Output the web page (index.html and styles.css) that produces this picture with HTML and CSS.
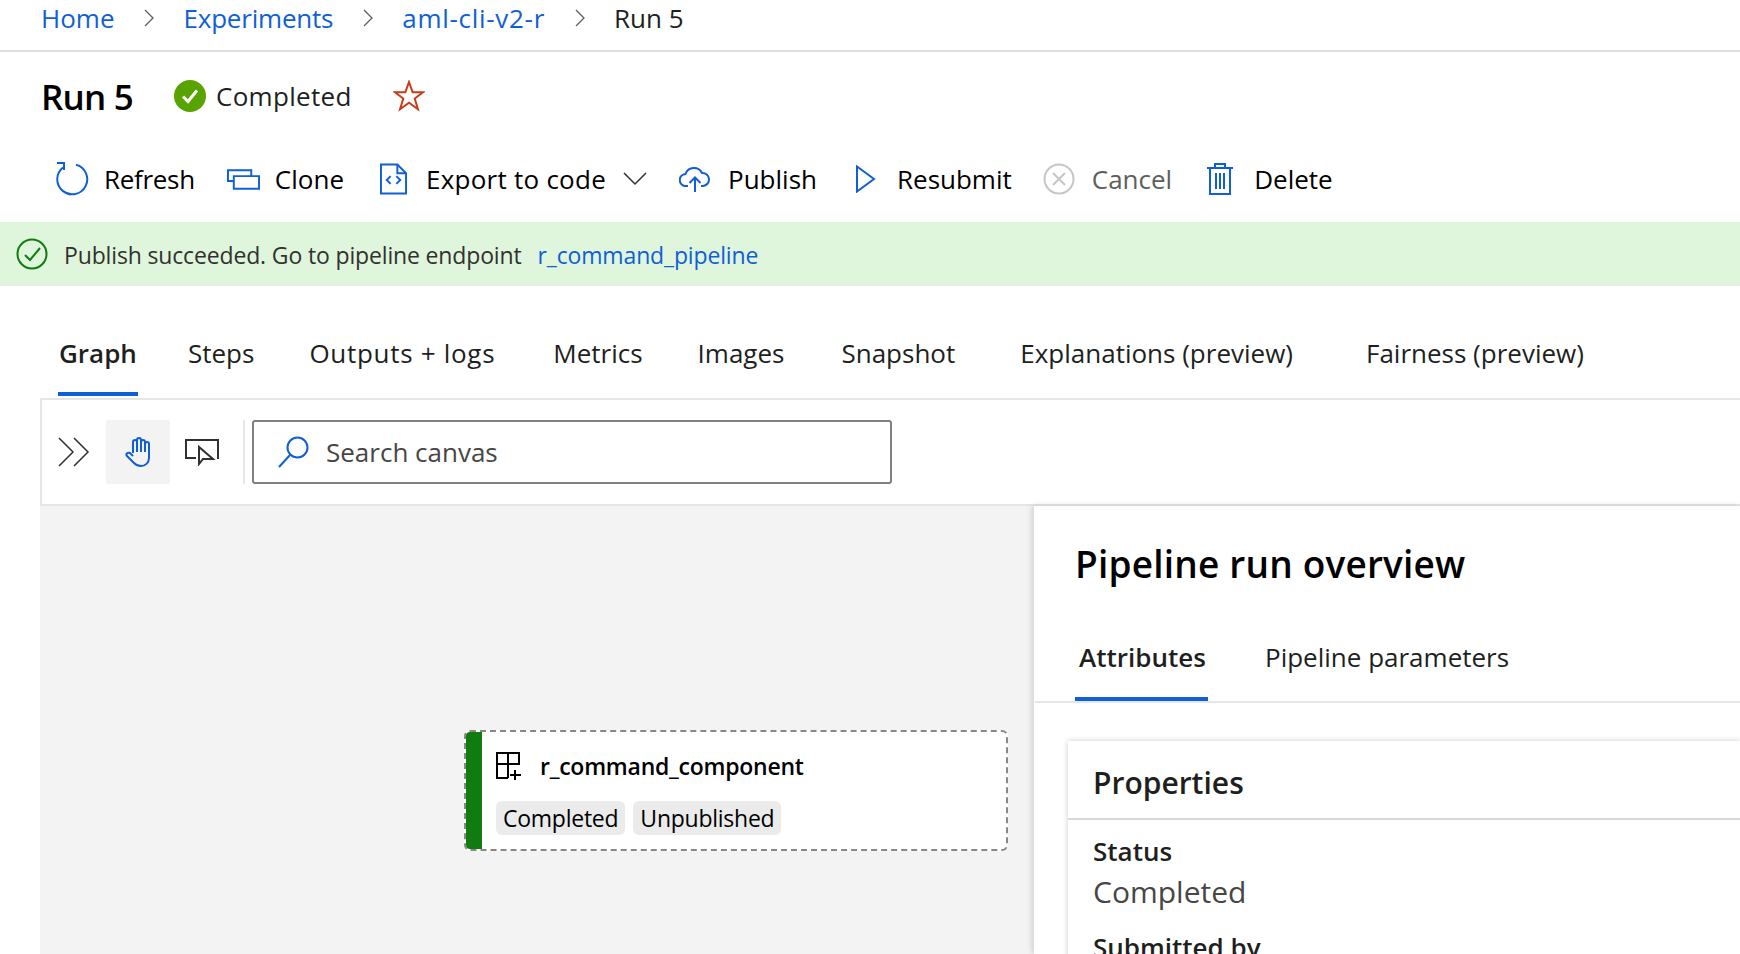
FILE: index.html
```html
<!DOCTYPE html>
<html lang="en">
<head>
  <meta charset="UTF-8">
  <meta name="viewport" content="width=device-width, initial-scale=1.0">
  <title>Run 5</title>
  <link rel="stylesheet" href="styles.css">
</head>
<body>
  <nav class="crumbs">
    <a href="#">Home</a>
    <svg class="crumb-sep" viewBox="0 0 10 18"><path d="M1 1l8 8-8 8"/></svg>
    <a class="crumb-tight" href="#">Experiments</a>
    <svg class="crumb-sep" viewBox="0 0 10 18"><path d="M1 1l8 8-8 8"/></svg>
    <a class="crumb-wide" href="#">aml-cli-v2-r</a>
    <svg class="crumb-sep" viewBox="0 0 10 18"><path d="M1 1l8 8-8 8"/></svg>
    <span>Run 5</span>
  </nav>

  <header class="title-row">
    <h1>Run 5</h1>
    <svg class="status-icon" viewBox="0 0 32 32"><circle cx="16" cy="16" r="16" fill="#57a300"/><path d="M9 16.500l5 5 9-11" fill="none" stroke="#fff" stroke-width="3"/></svg>
    <span class="status-text">Completed</span>
    <svg class="star" viewBox="0 0 24 24"><path d="M12 1.500l2.700 7.600h8l-6.400 4.800 2.400 8-6.700-4.800-6.700 4.800 2.400-8L1.300 9.100h8z"/></svg>
  </header>

  <div class="toolbar">
    <button class="tool tool-refresh">
      <svg viewBox="0 0 34 34"><path d="M21 2.800a15 15 0 1 1-13 2.700"/><path d="M2 1h7v7"/></svg>
      Refresh
    </button>
    <button class="tool tool-clone">
      <svg viewBox="0 0 34 21"><path d="M7 12H1V1h24v6"/><path d="M7 7h26v13H7z"/></svg>
      Clone
    </button>
    <button class="tool tool-export">
      <svg viewBox="0 0 28 32"><path d="M1 1h17l9 9v21H1z"/><path d="M18 1v9h9"/><path d="M11 13l-4 4 4 4M17 13l4 4-4 4"/></svg>
      Export to code
      <svg class="chevron" viewBox="0 0 24 14"><path d="M1 1l11 11L23 1"/></svg>
    </button>
    <button class="tool tool-publish">
      <svg viewBox="0 0 32 26"><path d="M9 20H7a6 6 0 0 1-.5-12A9 9 0 0 1 23 7a6.500 6.500 0 0 1 1 13h-2"/><path d="M16 26V12M10.500 17l5.500-5.500 5.500 5.500"/></svg>
      Publish
    </button>
    <button class="tool tool-resubmit">
      <svg viewBox="0 0 20 28"><path d="M1 1.500l17 12.500L1 26.500z"/></svg>
      Resubmit
    </button>
    <button class="tool tool-cancel" disabled>
      <svg viewBox="0 0 32 32"><circle cx="16" cy="16" r="14.500"/><path d="M10 10l12 12M22 10L10 22"/></svg>
      Cancel
    </button>
    <button class="tool tool-delete">
      <svg viewBox="0 0 26 32"><path d="M0 5h26M8 5V1h10v4M3 5v26h20V5M9 10v16M13 10v16M17 10v16"/></svg>
      Delete
    </button>
  </div>

  <div class="banner">
    <svg viewBox="0 0 32 32"><circle cx="16" cy="16" r="14.500"/><path d="M9 17l5 5 10-12"/></svg>
    <span>Publish succeeded. Go to pipeline endpoint</span>
    <a href="#">r_command_pipeline</a>
  </div>

  <div class="tabs">
    <a class="tab tab-active" href="#">Graph</a>
    <a class="tab tab-steps" href="#">Steps</a>
    <a class="tab tab-outputs" href="#">Outputs + logs</a>
    <a class="tab tab-metrics" href="#">Metrics</a>
    <a class="tab tab-images" href="#">Images</a>
    <a class="tab tab-snapshot" href="#">Snapshot</a>
    <a class="tab tab-explain" href="#">Explanations (preview)</a>
    <a class="tab tab-fair" href="#">Fairness (preview)</a>
  </div>

  <main class="graph">
    <div class="graph-tools">
      <svg class="expand" viewBox="0 0 32 32"><path d="M1 2l14 14L1 30M16 2l14 14-14 14"/></svg>
      <button class="graph-btn graph-btn-on">
        <svg viewBox="0 0 28 32"><path d="M9 17V6a2 2 0 0 1 4 0V4a2 2 0 0 1 4 0v2a2 2 0 0 1 4 0v2a2 2 0 0 1 4 0v14c0 5-4 8-8 8-3 0-5-1-7-3l-7-7c-2-2 1-4 3-3l3 3"/><path d="M13 6v10M17 6v10M21 8v8"/></svg>
      </button>
      <button class="graph-btn">
        <svg class="select-icon" viewBox="0 0 34 28"><path d="M11 20H1V2h32v19"/><path d="M14 9v17l4-5 10 0z"/></svg>
      </button>
      <div class="graph-div"></div>
      <div class="search">
        <svg viewBox="0 0 32 32"><circle cx="19.500" cy="11.500" r="10"/><path d="M12.500 18.500L1 31"/></svg>
        <span>Search canvas</span>
      </div>
    </div>

    <div class="graph-body">
      <div class="canvas">
        <div class="node">
          <div class="node-bar"></div>
          <div class="node-main">
            <div class="node-title">
              <svg viewBox="0 0 26 28"><path d="M1 1h22v11H1zM12 1v25M1 12v14h11M19 18v10M14 23h11"/></svg>
              <b>r_command_component</b>
            </div>
            <div class="node-tags">
              <span>Completed</span>
              <span>Unpublished</span>
            </div>
          </div>
        </div>
      </div>

      <aside class="panel">
        <h2>Pipeline run overview</h2>
        <div class="panel-tabs">
          <a class="panel-tab panel-tab-on" href="#">Attributes</a>
          <a class="panel-tab" href="#">Pipeline parameters</a>
        </div>
        <section class="card">
          <h3>Properties</h3>
          <dl>
            <dt>Status</dt>
            <dd>Completed</dd>
            <dt>Submitted by</dt>
          </dl>
        </section>
      </aside>
    </div>
  </main>
</body>
</html>
```

FILE: styles.css
```css
* {
  box-sizing: border-box;
}
html, body {
  height: 954px;
  margin: 0;
  overflow: hidden;
}
body {
  font-family: "Open Sans", "Noto Sans", sans-serif;
  font-size: 26px;
  color: #201f1e;
  background: #fff;
}
a {
  color: #0f5fd7;
  text-decoration: none;
}
svg {
  flex: none;
  fill: none;
  stroke-width: 2;
}

.crumbs {
  display: flex;
  align-items: center;
  height: 52px;
  padding: 0 0 14px 41px;
  border-bottom: 2px solid #dedede;
}
.crumb-tight {
  letter-spacing: -0.2px;
}
.crumb-wide {
  letter-spacing: 0.7px;
}
.crumb-sep {
  width: 10px;
  height: 18px;
  margin: 0 29px 0 30px;
  stroke: #605e5c;
  stroke-width: 1.300;
}

.title-row {
  display: flex;
  align-items: center;
  height: 88px;
  padding-left: 41px;
}
.title-row h1 {
  width: 91px;
  margin: 0 42px 0 0;
  font-size: 35px;
  font-weight: 600;
  color: #000;
  letter-spacing: -0.8px;
  white-space: nowrap;
}
.status-icon {
  width: 32px;
  height: 32px;
}
.status-text {
  margin-left: 10px;
  letter-spacing: 0.3px;
}
.star {
  width: 32px;
  height: 32px;
  margin-left: 41px;
  stroke: #c43e1c;
  stroke-width: 1.500;
}

.toolbar {
  display: flex;
  align-items: center;
  height: 82px;
  padding: 0 0 4px 55px;
}
.tool {
  display: flex;
  align-items: center;
  padding: 0;
  border: 0;
  background: none;
  font: inherit;
  color: #000;
  white-space: nowrap;
}
.tool svg {
  stroke: #0f5fd7;
}
.tool-refresh {
  letter-spacing: -0.3px;
}
.tool-refresh svg {
  width: 34px;
  height: 34px;
  margin-right: 15px;
}
.tool-clone {
  margin-left: 32px;
}
.tool-clone svg {
  width: 33px;
  height: 21px;
  margin-right: 15px;
}
.tool-export {
  margin-left: 36px;
  letter-spacing: 0.25px;
}
.tool-export > svg:first-child {
  width: 27px;
  height: 32px;
  margin-right: 19px;
}
.tool-export .chevron {
  width: 24px;
  height: 14px;
  margin-left: 17px;
  stroke: #323130;
  stroke-width: 1.500;
}
.tool-publish {
  margin-left: 32px;
}
.tool-publish svg {
  width: 32px;
  height: 26px;
  margin-right: 17px;
}
.tool-resubmit {
  margin-left: 39px;
}
.tool-resubmit svg {
  width: 20px;
  height: 28px;
  margin-right: 21px;
}
.tool-cancel {
  margin-left: 31px;
  color: #605e5c;
}
.tool-cancel svg {
  width: 32px;
  height: 32px;
  margin-right: 17px;
  stroke: #c8c6c4;
}
.tool-delete {
  margin-left: 35px;
}
.tool-delete svg {
  width: 26px;
  height: 32px;
  margin-right: 21px;
}

.banner {
  display: flex;
  align-items: center;
  height: 64px;
  padding-left: 16px;
  background: #dff6dd;
  font-size: 23px;
  letter-spacing: -0.15px;
}
.banner svg {
  width: 32px;
  height: 32px;
  margin-right: 16px;
  stroke: #107c10;
}
.banner span {
  margin-top: 2px;
  color: #323130;
}
.banner a {
  margin: 2px 0 0 16px;
}

.tabs {
  display: flex;
  align-items: flex-end;
  height: 112px;
  margin-left: 58px;
  padding-bottom: 2px;
}
.tab {
  height: 78px;
  padding-top: 17px;
  color: #201f1e;
}
.tab-active {
  width: 80px;
  padding-left: 1px;
  border-bottom: 4px solid #0f5fd7;
  font-weight: 600;
}
.tab-steps { margin-left: 50px; }
.tab-outputs { margin-left: 55px; letter-spacing: 0.7px; }
.tab-metrics { margin-left: 58px; }
.tab-images { margin-left: 55px; }
.tab-snapshot { margin-left: 57px; }
.tab-explain { margin-left: 65px; }
.tab-fair { margin-left: 73px; }

.graph {
  margin-left: 40px;
}
.graph-tools {
  display: flex;
  align-items: center;
  height: 108px;
  padding-left: 16px;
  border-top: 2px solid #e6e6e6;
  border-left: 2px solid #e6e6e6;
  border-bottom: 2px solid #e6e6e6;
}
.expand {
  width: 32px;
  height: 32px;
  stroke: #323130;
  stroke-width: 1.500;
}
.graph-btn {
  display: flex;
  align-items: center;
  justify-content: center;
  width: 64px;
  height: 64px;
  padding: 0;
  border: 0;
  border-radius: 3px;
  background: none;
}
.graph-btn svg {
  width: 28px;
  height: 32px;
  stroke: #323130;
}
.graph-btn-on {
  margin-left: 16px;
  background: #f3f3f3;
}
.graph-btn-on svg {
  stroke: #0f5fd7;
}
.graph-btn .select-icon {
  width: 34px;
  height: 28px;
}
.graph-div {
  width: 2px;
  height: 64px;
  margin: 0 7px 0 9px;
  background: #e6e6e6;
}
.search {
  display: flex;
  align-items: center;
  width: 640px;
  height: 64px;
  padding-left: 24px;
  border: 2px solid #808080;
  border-radius: 3px;
  color: #484644;
}
.search svg {
  width: 32px;
  height: 32px;
  margin-right: 16px;
  stroke: #0f5fd7;
}

.graph-body {
  display: flex;
  height: 448px;
  background: #f3f3f3;
}
.canvas {
  position: relative;
  flex: 1;
}
.node {
  position: absolute;
  left: 424px;
  top: 224px;
  display: flex;
  width: 544px;
  height: 121px;
  border: 2px dashed #8a8886;
  border-radius: 6px;
  background: #fff;
  color: #000;
}
.node-bar {
  width: 16px;
  background: #107c10;
  border-radius: 4px 0 0 4px;
}
.node-main {
  padding: 18px 0 0 14px;
  font-size: 23px;
  letter-spacing: -0.25px;
}
.node-title {
  display: flex;
  align-items: center;
  height: 31px;
}
.node-title svg {
  width: 26px;
  height: 28px;
  margin-right: 18px;
  stroke: #000;
}
.node-title b {
  font-weight: 600;
}
.node-tags {
  display: flex;
  gap: 8px;
  margin-top: 20px;
}
.node-tags span {
  height: 34px;
  padding: 0 7px;
  border-radius: 6px;
  background: #ebebeb;
  line-height: 34px;
}

.panel {
  width: 706px;
  padding-left: 1px;
  background: #fff;
  box-shadow: -2px 0 6px rgba(0,0,0,0.15);
}
.panel h2 {
  height: 107px;
  margin: 0;
  padding: 32px 0 0 40px;
  font-size: 37px;
  font-weight: 600;
  color: #000;
  letter-spacing: 0.2px;
}
.panel-tabs {
  display: flex;
  height: 90px;
  padding-left: 40px;
  border-bottom: 2px solid #e6e6e6;
}
.panel-tab {
  height: 88px;
  padding-top: 26px;
  color: #201f1e;
}
.panel-tab-on {
  width: 133px;
  margin-right: 57px;
  padding-left: 4px;
  border-bottom: 4px solid #0f5fd7;
  font-weight: 600;
}
.card {
  margin: 38px 0 0 33px;
  box-shadow: 0 0 6px rgba(0,0,0,0.2);
}
.card h3 {
  height: 79px;
  margin: 0;
  padding: 21px 0 0 25px;
  border-bottom: 2px solid #d8d8d8;
  font-size: 30px;
  font-weight: 600;
  color: #201f1e;
}
.card dl {
  margin: 0;
  padding: 13px 0 0 25px;
}
.card dt {
  font-weight: 600;
  color: #201f1e;
}
.card dd {
  margin: 2px 0 17px;
  font-size: 30px;
  color: #484644;
}
```
